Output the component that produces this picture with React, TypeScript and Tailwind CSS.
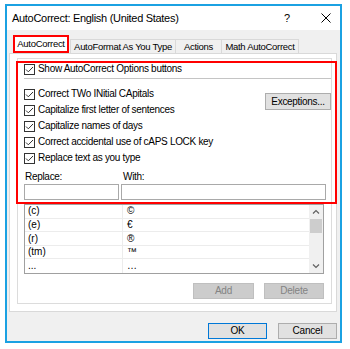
import React from "react";

const font = { fontFamily: '"Liberation Sans", Arial, sans-serif' };

function Check({ label }: { label: string }) {
  return (
    <div className="flex h-[16px] items-center gap-[3px]">
      <span className="flex h-[11px] w-[11px] items-center justify-center border border-[#333333] bg-white">
        <svg width="9" height="9" viewBox="0 0 9 9">
          <path d="M1 4.5 L3.3 6.8 L8 2" fill="none" stroke="#333333" strokeWidth="1" />
        </svg>
      </span>
      <span className="whitespace-nowrap text-[10px] leading-none tracking-[-0.3px] text-black">{label}</span>
    </div>
  );
}

function Btn({ label, disabled, primary, w }: { label: string; disabled?: boolean; primary?: boolean; w: string }) {
  return (
    <div
      className={`flex h-[16px] items-center justify-center border text-[10px] leading-none tracking-[-0.2px] ${w} ${
        disabled
          ? "border-[#bfbfbf] bg-[#cccccc] text-[#838383]"
          : primary
          ? "border-[#0078d7] bg-[#e1e1e1] text-black"
          : "border-[#adadad] bg-[#e1e1e1] text-black"
      }`}
    >
      {label}
    </div>
  );
}

const rows = [
  ["(c)", "©"],
  ["(e)", "€"],
  ["(r)", "®"],
  ["(tm)", "™"],
  ["...", "…"],
];

export default function App() {
  return (
    <div className="h-[349px] w-[350px] bg-white pl-[5px] pt-[4px]" style={font}>
      <div className="flex h-[339px] w-[337px] flex-col border-2 border-[#1ba1e2] bg-[#f0f0f0]">
        {/* title bar */}
        <div className="flex h-[24px] items-center bg-white pl-[5px] text-black">
          <span className="whitespace-nowrap text-[11px] tracking-[-0.3px]">AutoCorrect: English (United States)</span>
          <span className="ml-auto mr-[31px] text-[11px]">?</span>
          <svg width="10" height="10" viewBox="0 0 10 10" className="mr-[9px]">
            <path d="M0.5 0.5 L9.5 9.5 M9.5 0.5 L0.5 9.5" stroke="#000" strokeWidth="1" />
          </svg>
        </div>

        {/* body */}
        <div className="flex flex-col pl-[2px]">
          <div className="flex items-end whitespace-nowrap pl-[4px] pt-[5px] text-[9.5px] leading-none tracking-[-0.3px] text-black">
            <div className="flex h-[18px] w-[56px] items-center justify-center border-2 border-[#ff0000] bg-white">
              AutoCorrect
            </div>
            <div className="ml-[1px] flex h-[14px] w-[106px] items-center justify-center border border-b-0 border-[#d9d9d9]">
              AutoFormat As You Type
            </div>
            <div className="flex h-[14px] w-[46px] items-center justify-center border border-b-0 border-l-0 border-[#d9d9d9]">
              Actions
            </div>
            <div className="flex h-[14px] w-[77px] items-center justify-center border border-b-0 border-l-0 border-[#d9d9d9]">
              Math AutoCorrect
            </div>
          </div>

          {/* tab panel */}
          <div className="relative h-[259px] w-[328px] border border-[#d9d9d9] bg-white">
            <div className="ml-[7px] mt-[4px] flex h-[246px] w-[315px] flex-col border border-[#dcdcdc] pl-[6px]">
              <div className="mt-[2px]">
                <Check label="Show AutoCorrect Options buttons" />
              </div>
              <div className="mt-[1px] h-px bg-[#c4c4c4]" />

              <div className="mt-[7px] flex">
                <div className="flex flex-col">
                  <Check label="Correct TWo INitial CApitals" />
                  <Check label="Capitalize first letter of sentences" />
                  <Check label="Capitalize names of days" />
                  <Check label="Correct accidental use of cAPS LOCK key" />
                  <Check label="Replace text as you type" />
                </div>
                <div className="ml-auto mt-[7px]">
                  <div className="flex h-[17px] w-[66px] items-center justify-center border border-[#adadad] bg-[#e1e1e1] text-[10px] leading-none tracking-[-0.3px] text-black">
                    Exceptions...
                  </div>
                </div>
              </div>

              <div className="mt-[4px] flex h-[14px] items-center text-[10px] leading-none tracking-[-0.3px] text-black">
                <span className="w-[97px] pl-px">Replace:</span>
                <span className="pl-[2px]">With:</span>
              </div>
              <div className="flex gap-[2px]">
                <div className="h-[16px] w-[95px] border border-[#a9a9a9] bg-white" />
                <div className="h-[16px] w-[205px] border border-[#a9a9a9] bg-white" />
              </div>

              <div className="mt-[4px] flex h-[70px] w-[300px] border border-[#a0a0a0] text-[10px] leading-none text-black">
                <div className="flex flex-1 flex-col">
                  {rows.map(([a, b], i) => (
                    <div key={i} className={`flex h-[14px] ${i < 4 ? "border-b border-[#ececec]" : ""}`}>
                      <div className="flex w-[98px] items-center border-r border-[#ececec] pl-[3px]">{a}</div>
                      <div className="flex items-center pl-[4px]">{b}</div>
                    </div>
                  ))}
                </div>
                <div className="flex w-[14px] flex-col items-center bg-[#f0f0f0]">
                  <svg width="8" height="14" viewBox="0 0 8 14">
                    <path d="M1 8.5 L4 5.5 L7 8.5" fill="none" stroke="#606060" strokeWidth="1.2" />
                  </svg>
                  <div className="h-[14px] w-[12px] bg-[#cdcdcd]" />
                  <svg width="8" height="14" viewBox="0 0 8 14" className="mt-auto">
                    <path d="M1 5.5 L4 8.5 L7 5.5" fill="none" stroke="#606060" strokeWidth="1.2" />
                  </svg>
                </div>
              </div>

              <div className="mt-[9px] flex w-[300px] justify-end gap-[10px]">
                <Btn label="Add" disabled w="w-[61px]" />
                <Btn label="Delete" disabled w="w-[60px]" />
              </div>
            </div>

            <div className="pointer-events-none absolute left-[6px] top-[7px] h-[143px] w-[321px] border-2 border-[#ff0000]" />
          </div>

          {/* footer */}
          <div className="flex justify-end gap-[11px] pr-[3px] pt-[11px]">
            <Btn label="OK" primary w="w-[59px]" />
            <Btn label="Cancel" w="w-[59px]" />
          </div>
        </div>
      </div>
    </div>
  );
}
